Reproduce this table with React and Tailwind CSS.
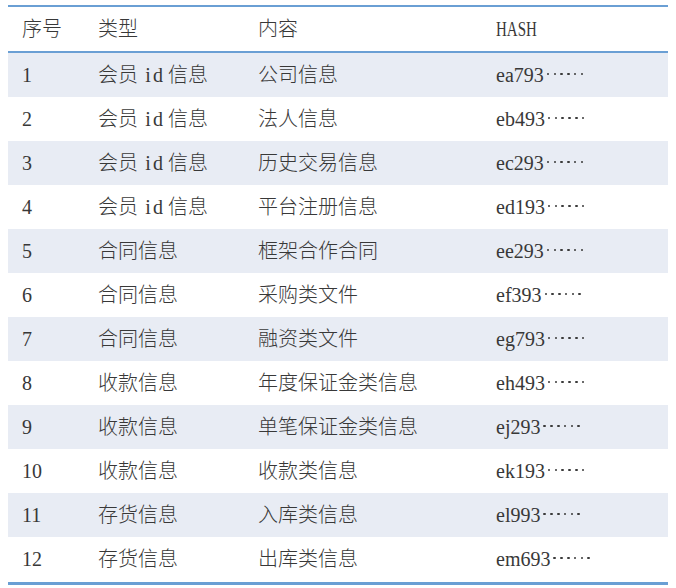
const rows = [
  ["1", "id", "公司信息", "ea793"],
  ["2", "id", "法人信息", "eb493"],
  ["3", "id", "历史交易信息", "ec293"],
  ["4", "id", "平台注册信息", "ed193"],
  ["5", "合同信息", "框架合作合同", "ee293"],
  ["6", "合同信息", "采购类文件", "ef393"],
  ["7", "合同信息", "融资类文件", "eg793"],
  ["8", "收款信息", "年度保证金类信息", "eh493"],
  ["9", "收款信息", "单笔保证金类信息", "ej293"],
  ["10", "收款信息", "收款类信息", "ek193"],
  ["11", "存货信息", "入库类信息", "el993"],
  ["12", "存货信息", "出库类信息", "em693"],
];

const font = { fontFamily: '"Liberation Serif", "Noto Sans CJK SC", serif' };

function Dots() {
  return (
    <span className="inline-flex items-center gap-[4.2px] ml-[3px] -translate-y-[1px]">
      {[0, 1, 2, 3, 4, 5].map((k) => (
        <span key={k} className="block w-[2.6px] h-[2.6px] rounded-full bg-[#3a3a3a]" />
      ))}
    </span>
  );
}

function MemberId() {
  return (
    <span>
      会员{" "}
      <span className="inline-block w-[10px] text-center">i</span>
      <span className="inline-block w-[10px] text-center">d</span> 信息
    </span>
  );
}

function Cells({ cols }) {
  return (
    <>
      <div className="pl-[14px]">{cols[0]}</div>
      <div className="pl-[14px]">{cols[1]}</div>
      <div className="pl-[14px]">{cols[2]}</div>
      <div className="pl-[14px]">{cols[3]}</div>
    </>
  );
}

export default function App() {
  return (
    <div className="w-[676px] h-[588px] bg-white pt-[5px] px-[8px]">
      <div className="w-[660px] text-[20px] text-[#383838] font-light" style={font}>
        <div className="border-t-2 border-b-2 border-[#6a9fd4] h-[48px] grid grid-cols-[76px_160px_238px_1fr] items-center">
          <Cells
            cols={[
              "序号",
              "类型",
              "内容",
              <span className="inline-block scale-x-75 origin-left">HASH</span>,
            ]}
          />
        </div>
        {rows.map((r, i) => (
          <div
            key={i}
            className={
              "h-[44px] grid grid-cols-[76px_160px_238px_1fr] items-center " +
              (i % 2 === 0 ? "bg-[#e8ecf4]" : "bg-white")
            }
          >
            <Cells
              cols={[
                r[0],
                r[1] === "id" ? <MemberId /> : r[1],
                r[2],
                <span className="inline-flex items-center">
                  <span>{r[3]}</span>
                  <Dots />
                </span>,
              ]}
            />
          </div>
        ))}
        <div className="border-t-[3px] border-[#6a9fd4] mt-px" />
      </div>
    </div>
  );
}
